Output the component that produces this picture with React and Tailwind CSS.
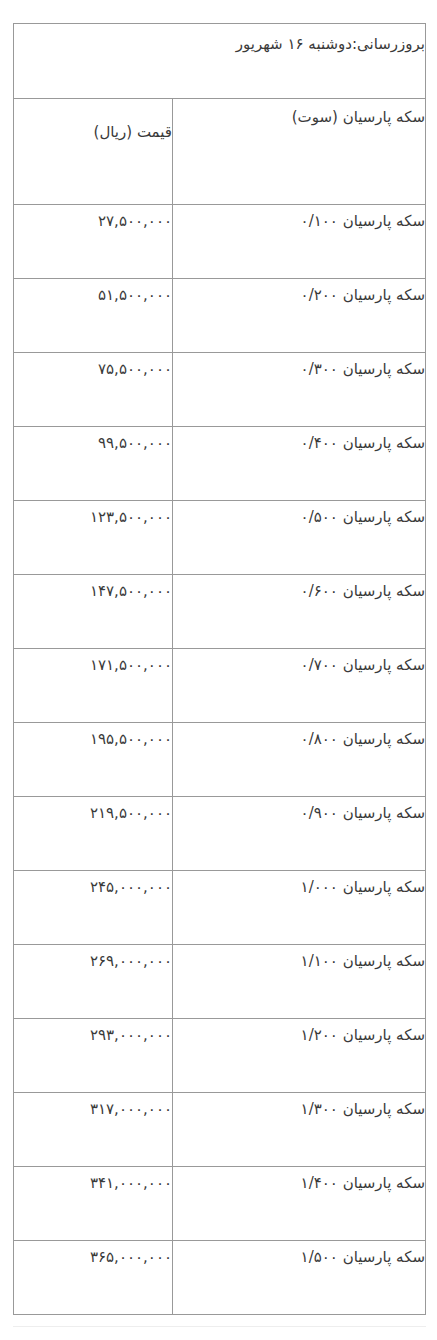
const toFa = (s) => s.replace(/\d/g, (d) => "۰۱۲۳۴۵۶۷۸۹"[d]);

const rows = [
  ["0/100", "27,500,000"],
  ["0/200", "51,500,000"],
  ["0/300", "75,500,000"],
  ["0/400", "99,500,000"],
  ["0/500", "123,500,000"],
  ["0/600", "147,500,000"],
  ["0/700", "171,500,000"],
  ["0/800", "195,500,000"],
  ["0/900", "219,500,000"],
  ["1/000", "245,000,000"],
  ["1/100", "269,000,000"],
  ["1/200", "293,000,000"],
  ["1/300", "317,000,000"],
  ["1/400", "341,000,000"],
  ["1/500", "365,000,000"],
];

export default function App() {
  return (
    <div className="min-h-screen bg-white pl-[13px] pr-[11px] pt-[23px] pb-4 font-['DejaVu_Sans',sans-serif] text-[15px] leading-6 text-[#3a3a3a]">
      <table dir="rtl" className="w-full table-fixed border-collapse">
        <colgroup>
          <col className="w-[253px]" />
          <col />
        </colgroup>
        <tbody>
          <tr className="h-[75px]">
            <td colSpan={2} className="border border-[#999] p-0 pt-[8px] text-right align-top">
              بروزرسانی:دوشنبه {toFa("16")} شهریور
            </td>
          </tr>
          <tr className="h-[106px]">
            <td className="border border-[#999] p-0 pt-[6px] text-right align-top">سکه پارسیان (سوت)</td>
            <td className="border border-[#999] p-0 pt-[21px] text-right align-top">قیمت (ریال)</td>
          </tr>
          {rows.map(([w, price]) => (
            <tr key={w} className="h-[74px]">
              <td className="border border-[#999] p-0 pt-[4px] text-right align-top">
                سکه پارسیان {toFa(w)}
              </td>
              <td className="border border-[#999] p-0 pt-[4px] text-right align-top">{toFa(price)}</td>
            </tr>
          ))}
        </tbody>
      </table>
      <div className="mt-[11px] h-px bg-[#eee]" />
    </div>
  );
}
